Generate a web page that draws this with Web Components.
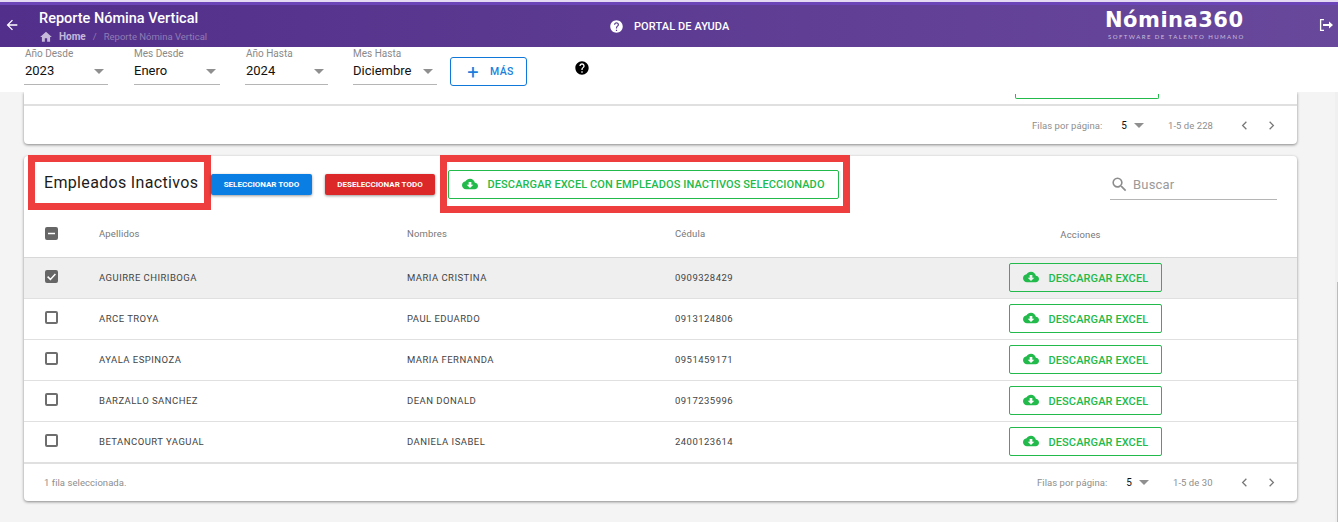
<!DOCTYPE html>
<html lang="es">
<head>
<meta charset="utf-8">
<title>Reporte Nómina Vertical</title>
<style>
    html, body { margin: 0; height: 100%; overflow: hidden; }
    body { background: #f4f4f4; font-family: Roboto, "Liberation Sans", sans-serif; }
</style>
</head>
<body>
<app-header></app-header>
<filter-bar></filter-bar>
<page-main>
    <first-card></first-card>
    <inactive-card></inactive-card>
</page-main>
<scroll-rail></scroll-rail>

<script>
const ICONS = {
    cloud: '<svg viewBox="0 0 24 24" width="16" height="16"><path fill="#21ba4b" d="M19.35 10.04C18.67 6.59 15.64 4 12 4 9.11 4 6.6 5.64 5.35 8.04 2.34 8.36 0 10.91 0 14c0 3.31 2.69 6 6 6h13c2.76 0 5-2.24 5-5 0-2.64-2.05-4.78-4.65-4.96zM17 13l-5 5-5-5h3V9h4v4h3z"/></svg>',
    help: '<svg viewBox="0 0 24 24" width="100%" height="100%"><path fill="currentColor" d="M12 2C6.48 2 2 6.48 2 12s4.48 10 10 10 10-4.48 10-10S17.52 2 12 2zm1 17h-2v-2h2v2zm2.07-7.75l-.9.92C13.45 12.9 13 13.5 13 15h-2v-.5c0-1.1.45-2.1 1.17-2.83l1.24-1.26c.37-.36.59-.86.59-1.41 0-1.1-.9-2-2-2s-2 .9-2 2H8c0-2.21 1.79-4 4-4s4 1.79 4 4c0 .88-.36 1.68-.93 2.25z"/></svg>'
};

function define(name, css, html) {
    customElements.define(name, class extends HTMLElement {
        constructor() {
            super();
            this.attachShadow({mode: "open"});
            this.shadowRoot.innerHTML = `<style>${css}</style>${typeof html === 'function' ? html(this) : html}`;
        }
    });
}

define('app-header', `
    :host {
        display: flex;
        box-sizing: border-box;
        height: 47px;
        align-items: center;
        color: #fff;
        background: linear-gradient(90deg, #522f8a, #68489b);
        border-top: 2px solid #e4daf3;
        box-shadow: inset 0 3px 0 #6c45b8;
    }
    .back { width: 16px; height: 16px; margin-left: 4px; color: #fff; flex: none; }
    .titles { width: 570px; margin-left: 19px; padding-top: 4px; flex: none; }
    .title { font-size: 14.5px; font-weight: 500; line-height: 18px; }
    .crumbs { display: flex; align-items: center; height: 14px; margin-top: 2px; font-size: 9.5px; color: #8f7db4; }
    .crumbs svg { width: 14px; height: 14px; color: #c6b9da; margin-right: 6px; }
    .crumbs b { color: #c6b9da; font-weight: 700; font-size: 10px; }
    .crumbs i { font-style: normal; margin: 0 7px; }
    .portal { display: flex; align-items: center; width: 496px; padding-top: 3px; font-size: 11px; font-weight: 500; letter-spacing: .1px; flex: none; }
    .portal span { width: 15px; height: 15px; margin-right: 10px; }
    .logo { width: 213px; display: flex; flex-direction: column; align-items: flex-start; flex: none; }
    .logo strong { font: 700 21px/22px "DejaVu Sans", sans-serif; letter-spacing: .5px; }
    .logo small { font: 400 6px/7px Lato, sans-serif; letter-spacing: 1.45px; color: #c9bedd; margin: 2px 0 0 3px; }
    .exit { width: 16px; height: 16px; flex: none; }
`, `
    <svg class="back" viewBox="0 0 24 24"><path fill="currentColor" d="M20 11H7.83l5.59-5.59L12 4l-8 8 8 8 1.41-1.41L7.83 13H20v-2z"/></svg>
    <div class="titles">
        <div class="title">Reporte Nómina Vertical</div>
        <div class="crumbs">
            <svg viewBox="0 0 24 24"><path fill="currentColor" d="M10 20v-6h4v6h5v-8h3L12 3 2 12h3v8z"/></svg>
            <b>Home</b><i>/</i><span>Reporte Nómina Vertical</span>
        </div>
    </div>
    <div class="portal"><span>${ICONS.help}</span>PORTAL DE AYUDA</div>
    <div class="logo"><strong>Nómina360</strong><small>SOFTWARE DE TALENTO HUMANO</small></div>
    <svg class="exit" viewBox="0 0 16 16"><path fill="none" stroke="currentColor" stroke-width="1.3" d="M6 2.6H2.6v10.8H6"/><path fill="currentColor" d="M5 7h6V4.4L15 8l-4 3.6V9H5z"/></svg>
`);

define('select-field', `
    :host {
        display: block;
        box-sizing: border-box;
        height: 38px;
        border-bottom: 1px solid #b5b5b5;
        padding-left: 1px;
    }
    label { display: block; font-size: 10px; line-height: 12px; color: #8a8a8a; margin-top: 1px; }
    div { display: flex; justify-content: space-between; align-items: center; font-size: 13px; line-height: 20px; margin-top: 1px; color: #111; }
    i { border: 5px solid transparent; border-top-color: #8f8f8f; border-bottom: 0; margin-right: 4px; }
`, el => `
    <label>${el.getAttribute('label')}</label>
    <div><span>${el.getAttribute('value')}</span><i></i></div>
`);

define('filter-bar', `
    :host {
        display: flex;
        box-sizing: border-box;
        height: 45px;
        align-items: flex-start;
        background: #fff;
        padding: 0 0 0 24px;
        position: relative;
        z-index: 2;
    }
    select-field:nth-of-type(1) { width: 84px; }
    select-field:nth-of-type(2) { width: 86px; margin-left: 26px; padding-left: 0; }
    select-field:nth-of-type(3) { width: 83px; margin-left: 25px; }
    select-field:nth-of-type(4) { width: 84px; margin-left: 25px; padding-left: 0; }
    button {
        display: flex; align-items: center; justify-content: center;
        box-sizing: border-box;
        width: 77px; height: 29px; margin: 10px 0 0 13px; padding: 0 0 0 4px;
        border: 1px solid #0f78d8; border-radius: 3px; background: #fff;
        color: #1a7fdc; font: 500 10.5px Roboto, sans-serif; letter-spacing: .4px;
    }
    button span { font-size: 20px; font-weight: 400; line-height: 20px; margin-right: 11px; }
    .help { width: 16px; height: 16px; margin: 13px 0 0 47px; color: #000; }
`, `
    <select-field label="Año Desde" value="2023"></select-field>
    <select-field label="Mes Desde" value="Enero"></select-field>
    <select-field label="Año Hasta" value="2024"></select-field>
    <select-field label="Mes Hasta" value="Diciembre"></select-field>
    <button><span>+</span>MÁS</button>
    <div class="help">${ICONS.help}</div>
`);

define('page-main', `
    :host { display: block; padding: 0 41px 0 24px; }
`, `<slot></slot>`);

define('table-pager', `
    :host {
        display: flex;
        box-sizing: border-box;
        height: 39px;
        align-items: center;
        border-top: 2px solid #e0e0e0;
        padding: 0 18px 0 20px;
        font-size: 9.5px;
        color: #8e8e8e;
        letter-spacing: .05px;
    }
    .note { flex: 1; }
    .size { color: #111; margin-left: 19px; font-size: 10px; }
    .caret { border: 5px solid transparent; border-top-color: #8f8f8f; border-bottom: 0; margin: 0 24px 0 7px; }
    .range { flex: none; white-space: nowrap; }
    svg { width: 15px; height: 15px; color: #777; flex: none; }
    svg.prev { margin-left: 25px; }
    svg.next { margin-left: 12px; }
`, el => `
    <span class="note">${el.getAttribute('note') || ''}</span>
    <span>Filas por página:</span><span class="size">5</span><i class="caret"></i>
    <span class="range" style="width:${el.getAttribute('range-width')}px">${el.getAttribute('range')}</span>
    <svg class="prev" viewBox="0 0 24 24"><path fill="none" stroke="currentColor" stroke-width="2" d="M15 6l-6 6 6 6"/></svg>
    <svg class="next" viewBox="0 0 24 24"><path fill="none" stroke="currentColor" stroke-width="2" d="M9 6l6 6-6 6"/></svg>
`);

define('first-card', `
    :host {
        display: block;
        background: #fff;
        border-radius: 0 0 4px 4px;
        box-shadow: 0 1px 3px rgba(0,0,0,.45);
        margin-bottom: 12px;
    }
    .stub { height: 12px; position: relative; }
    .stub div {
        position: absolute; left: 991px; bottom: 5px; width: 142px; height: 4px;
        border: 1px solid #21ba4b; border-top: 0; border-radius: 0 0 2px 2px;
    }
    table-pager { height: 40px; }
`, `
    <div class="stub"><div></div></div>
    <table-pager range="1-5 de 228" range-width="44"></table-pager>
`);

define('excel-button', `
    :host {
        display: inline-flex;
        box-sizing: border-box;
        align-items: center;
        height: 29px;
        border: 1px solid #21ba4b;
        border-radius: 2px;
        color: #21ba4b;
        font: 500 11px Roboto, sans-serif;
        letter-spacing: .1px;
        white-space: nowrap;
        padding-left: 13px;
    }
    svg { margin: 0 9.5px var(--icon-lift, 2px) 0; flex: none; }
`, `${ICONS.cloud}<slot></slot>`);

define('check-box', `
    :host { display: block; width: 13px; height: 13px; box-sizing: border-box; border: 2px solid #6e6e6e; border-radius: 2px; position: relative; }
    :host([state="on"]), :host([state="mixed"]) { background: #666; border-color: #666; }
    svg { position: absolute; inset: -2px; width: 13px; height: 13px; }
`, el => {
    const state = el.getAttribute('state');
    if (state === 'on') return '<svg viewBox="0 0 13 13"><path fill="none" stroke="#fff" stroke-width="1.5" d="M2.6 6.6l2.8 2.8 5-5.4"/></svg>';
    if (state === 'mixed') return '<svg viewBox="0 0 13 13"><path stroke="#fff" stroke-width="1.5" d="M3 6.5h7"/></svg>';
    return '';
});

define('employee-row', `
    :host {
        display: grid;
        box-sizing: border-box;
        grid-template-columns: 75px 308px 268px 334px 153px;
        align-items: center;
        height: 41px;
        border-bottom: 1px solid #e0e0e0;
        font-size: 9.5px;
        letter-spacing: .47px;
        color: #444;
    }
    :host([selected]) { background: #efefef; }
    check-box { margin: 0 0 3px 21px; }
    span { padding-bottom: 2px; }
    excel-button { width: 153px; margin-bottom: 1px; padding-top: 2px; --icon-lift: 4px; }
`, el => `
    <check-box ${el.hasAttribute('selected') ? 'state="on"' : ''}></check-box>
    <span>${el.getAttribute('last')}</span>
    <span>${el.getAttribute('first')}</span>
    <span>${el.getAttribute('id-number')}</span>
    <excel-button>DESCARGAR EXCEL</excel-button>
`);

define('inactive-card', `
    :host {
        display: block;
        background: #fff;
        border-radius: 4px;
        box-shadow: 0 1px 3px rgba(0,0,0,.45);
    }
    .top { display: flex; align-items: flex-start; height: 57px; }
    .mark { box-sizing: border-box; border: 7px solid #ee3e3e; background: #fff; }
    .mark.name {
        width: 183px; height: 55px; margin: -1px 0 0 4px;
        display: flex; align-items: center; padding-left: 9px;
        font-size: 16px; letter-spacing: .33px; color: #1c1c1c; white-space: nowrap;
    }
    .pill {
        box-sizing: border-box; height: 21px; margin-top: 18px; border-radius: 2px;
        display: flex; align-items: center; justify-content: center;
        color: #fff; font-size: 8px; font-weight: 700;
        box-shadow: 0 1px 3px rgba(0,0,0,.4);
    }
    .pill.all { width: 101px; background: #0b7ee4; }
    .pill.none { width: 110px; background: #dc2828; margin-left: 13px; }
    .mark.bulk {
        width: 410px; height: 58px; margin: -1px 0 0 5px;
        padding: 8px 4px 0 1px;
    }
    .mark.bulk excel-button { width: 391px; }
    .search {
        display: flex; align-items: center; box-sizing: border-box;
        width: 167px; height: 31px; margin: 13px 0 0 260px;
        border-bottom: 1px solid #b5b5b5;
        font-size: 13px; color: #9a9a9a; letter-spacing: .2px;
    }
    .search svg { width: 19px; height: 19px; margin-right: 4px; color: #8c8c8c; }
    .head {
        display: grid;
        box-sizing: border-box;
        grid-template-columns: 75px 308px 268px 334px 153px;
        align-items: center;
        height: 45px;
        padding-bottom: 3px;
        border-bottom: 1px solid #d8d8d8;
        font-size: 9.5px;
        letter-spacing: .15px;
        color: #777;
    }
    .head check-box { margin-left: 21px; }
    .head .act { text-align: center; padding: 2px 10px 0 0; }
    table-pager { margin-top: -1px; position: relative; }
`, `
    <div class="top">
        <div class="mark name">Empleados Inactivos</div>
        <div class="pill all">SELECCIONAR TODO</div>
        <div class="pill none">DESELECCIONAR TODO</div>
        <div class="mark bulk"><excel-button>DESCARGAR EXCEL CON EMPLEADOS INACTIVOS SELECCIONADO</excel-button></div>
        <div class="search">
            <svg viewBox="0 0 24 24"><path fill="currentColor" d="M15.5 14h-.79l-.28-.27A6.47 6.47 0 0 0 16 9.5 6.5 6.5 0 1 0 9.5 16c1.61 0 3.09-.59 4.23-1.57l.27.28v.79l5 4.99L20.49 19l-4.99-5zm-6 0C7.01 14 5 11.99 5 9.5S7.01 5 9.5 5 14 7.01 14 9.5 11.99 14 9.5 14z"/></svg>
            Buscar
        </div>
    </div>
    <div class="head">
        <check-box state="mixed"></check-box>
        <span>Apellidos</span><span>Nombres</span><span>Cédula</span><span class="act">Acciones</span>
    </div>
    <employee-row selected last="AGUIRRE CHIRIBOGA" first="MARIA CRISTINA" id-number="0909328429"></employee-row>
    <employee-row last="ARCE TROYA" first="PAUL EDUARDO" id-number="0913124806"></employee-row>
    <employee-row last="AYALA ESPINOZA" first="MARIA FERNANDA" id-number="0951459171"></employee-row>
    <employee-row last="BARZALLO SANCHEZ" first="DEAN DONALD" id-number="0917235996"></employee-row>
    <employee-row last="BETANCOURT YAGUAL" first="DANIELA ISABEL" id-number="2400123614"></employee-row>
    <table-pager note="1 fila seleccionada." range="1-5 de 30" range-width="39"></table-pager>
`);

// thin page scrollbar on the right edge, lies over the page
define('scroll-rail', `
    :host { position: fixed; top: 92px; right: 0; bottom: 0; width: 3px; background: #f0f0f0; }
    div { position: absolute; top: 190px; right: 0; bottom: 0; width: 1px; background: #bbb; }
`, `<div></div>`);
</script>
</body>
</html>
